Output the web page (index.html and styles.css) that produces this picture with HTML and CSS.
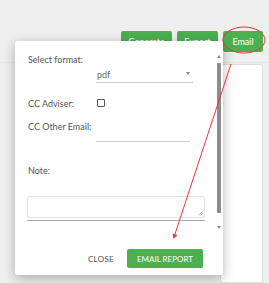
FILE: index.html
```
<!DOCTYPE html>
<html lang="en">
<head>
  <meta charset="UTF-8" />
  <meta name="viewport" content="width=device-width, initial-scale=1.0"/>
  <title>Email report</title>
  <link rel="stylesheet" href="styles.css">
</head>
<body>
  <div class="page">
    <div class="toolbar">
      <button class="btn btn-generate">Generate</button>
      <button class="btn btn-export">Export</button>
      <button class="btn btn-email">Email</button>
    </div>
    <div class="content">
      <div class="card"></div>
    </div>
  </div>

  <div class="modal">
    <div class="modal-body">
      <div class="form">
        <div class="row row-format">
          <label>Select format:</label>
          <div class="select"><span>pdf</span><span class="caret"></span></div>
        </div>
        <div class="row row-adviser">
          <label>CC Adviser:</label>
          <span class="checkbox"></span>
        </div>
        <div class="row row-other">
          <label>CC Other Email:</label>
          <div class="input"></div>
        </div>
        <div class="row row-note">
          <label>Note:</label>
        </div>
        <div class="textarea-wrap">
          <div class="textarea">
            <svg class="grip" width="5" height="5" viewBox="0 0 5 5">
              <path d="M0.5 4.5 L4.5 0.5 M2.5 4.5 L4.5 2.5" stroke="#999" stroke-width="0.7"/>
            </svg>
          </div>
        </div>
      </div>
      <div class="scrollbar">
        <span class="arrow up"></span>
        <span class="thumb"></span>
        <span class="arrow down"></span>
      </div>
    </div>
    <div class="modal-footer">
      <button class="link-btn">Close</button>
      <button class="btn btn-report">Email Report</button>
    </div>
  </div>

  <svg class="annotation" width="269" height="283" viewBox="0 0 269 283">
    <ellipse cx="244" cy="40" rx="21" ry="13" fill="none" stroke="#e53935" stroke-width="1"/>
    <line x1="231" y1="64" x2="175" y2="234" stroke="#e53935" stroke-width="1"/>
    <polygon points="173.5,239 172.5,233.5 177.5,235" fill="#e53935"/>
  </svg>
</body>
</html>
```

FILE: styles.css
```
:root {
  --bg: #efefef;
  --green: #4caf50;
  --text: #555;
  --line: #cfcfcf;
}

* {
  box-sizing: border-box;
}

body {
  margin: 0;
  width: 269px;
  height: 283px;
  overflow: hidden;
  position: relative;
  background: var(--bg);
  color: var(--text);
  font-family: Lato, 'Open Sans', sans-serif;
  font-size: 9px;
}

.toolbar {
  display: flex;
  justify-content: flex-end;
  gap: 5px;
  padding: 31px 6px 0 0;
  height: 62px;
}

.btn {
  height: 21px;
  border: none;
  border-radius: 2px;
  background: var(--green);
  color: #fff;
  font-family: inherit;
  font-size: 9px;
  padding: 0;
  cursor: pointer;
}

.btn-generate {
  width: 51px;
}

.btn-export {
  width: 41px;
}

.btn-email {
  width: 40px;
}

.content {
  border-top: 1px solid #e6e6e6;
  display: flex;
  justify-content: flex-end;
  padding: 1px 6px 0 0;
  height: 221px;
}

.card {
  width: 43px;
  background: #fff;
  border: 1px solid #dedede;
  border-radius: 0 3px 0 0;
}

.modal {
  position: absolute;
  left: 15px;
  top: 41px;
  width: 208px;
  height: 234px;
  background: #fff;
  border-radius: 2px;
  box-shadow: 0 3px 12px rgba(0, 0, 0, 0.3);
  display: flex;
  flex-direction: column;
}

.modal-body {
  flex: 1;
  display: flex;
}

.form {
  flex: 1;
  padding: 13px 0 0 12px;
}

.row {
  display: grid;
  grid-template-columns: 69px 97px;
  align-items: start;
}

.row label {
  line-height: 11px;
  padding-left: 1px;
}

.select {
  margin-top: 13px;
  height: 16px;
  line-height: 15px;
  border-bottom: 1px solid var(--line);
  display: flex;
  justify-content: space-between;
  align-items: center;
  padding: 0 3px 0 1px;
  color: #666;
}

.caret {
  width: 0;
  height: 0;
  border-left: 2.5px solid transparent;
  border-right: 2.5px solid transparent;
  border-top: 3px solid #888;
  margin-top: -3px;
}

.row-adviser {
  margin-top: 15px;
  align-items: center;
}

.checkbox {
  width: 8px;
  height: 8px;
  border: 1px solid #555;
  border-radius: 1px;
  margin-left: 1px;
  margin-top: -2px;
}

.row-other {
  margin-top: 12px;
}

.input {
  height: 21px;
  width: 94px;
  border-bottom: 1px solid var(--line);
}

.row-note {
  margin-top: 23px;
}

.textarea-wrap {
  margin-top: 20px;
  width: 178px;
  padding-bottom: 2px;
  border-bottom: 1px solid #aaa;
}

.textarea {
  height: 22px;
  border: 1px solid #e2e2e2;
  border-radius: 2px;
  position: relative;
}

.grip {
  position: absolute;
  right: 1px;
  bottom: 1px;
}

.scrollbar {
  width: 6px;
  margin: 12px 1px 0 0;
  height: 179px;
  display: flex;
  flex-direction: column;
  align-items: center;
}

.arrow {
  width: 0;
  height: 0;
  border-left: 2.5px solid transparent;
  border-right: 2.5px solid transparent;
}

.arrow.up {
  margin-top: 2px;
  border-bottom: 3px solid #8c8c8c;
}

.arrow.down {
  margin-top: 13px;
  border-top: 3px solid #8c8c8c;
}

.thumb {
  margin-top: 5px;
  width: 4px;
  height: 150px;
  background: #8c8c8c;
  border-radius: 1px;
}

.modal-footer {
  display: flex;
  justify-content: flex-end;
  align-items: center;
  gap: 13px;
  padding: 0 20px 7px 0;
}

.link-btn {
  background: none;
  border: none;
  padding: 0;
  font-family: inherit;
  font-size: 8px;
  text-transform: uppercase;
  letter-spacing: 0.3px;
  color: var(--text);
}

.btn-report {
  height: 19px;
  width: 76px;
  font-size: 8px;
  text-transform: uppercase;
}

.annotation {
  position: absolute;
  left: 0;
  top: 0;
  pointer-events: none;
}
```
